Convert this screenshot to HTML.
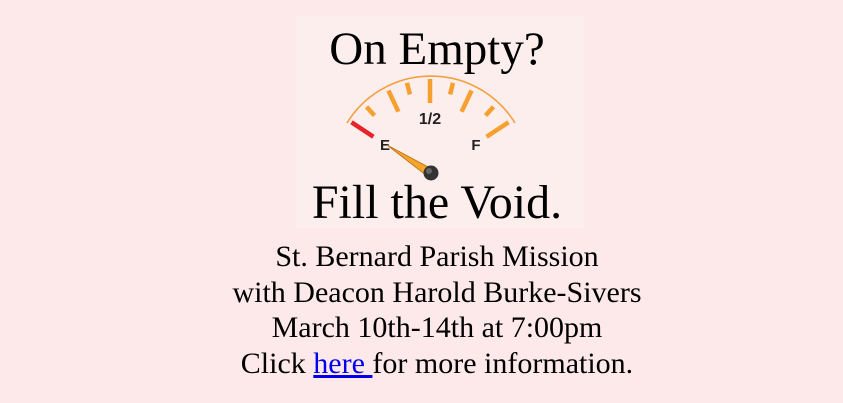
<!DOCTYPE html>
<html><head><meta charset="utf-8"><style>
html,body{margin:0;padding:0;}
body{width:843px;height:403px;background:#fde9e9;position:relative;overflow:hidden;font-family:"Liberation Serif","Times New Roman",serif;color:#000;}
.img{position:absolute;left:296px;top:16px;width:288px;height:212px;background:#fdeeee;}
.t{position:absolute;left:0;width:874px;text-align:center;white-space:nowrap;}
.big{font-size:47px;line-height:47px;}
.sm{font-size:30px;line-height:35.6px;}
a{color:#0000ee;text-decoration:underline;}
</style></head><body>
<div class="img"></div>
<div class="t big" style="top:26px;">On Empty?</div>
<svg style="position:absolute;left:0;top:0" width="843" height="403">
<path d="M347,123 A98.6,98.6 0 0 1 515,123" fill="none" stroke="#f4a040" stroke-width="1.6"/>
<g stroke-width="4.5" stroke-linecap="butt">
<line x1="351.5" y1="122.3" x2="373.4" y2="136.7" stroke="#e8222a"/>
<line x1="366.5" y1="106.8" x2="374.5" y2="115.5" stroke="#f7a030"/>
<line x1="388.4" y1="90.5" x2="398.4" y2="111.7" stroke="#f7a030"/>
<line x1="407.0" y1="82.8" x2="409.9" y2="94.4" stroke="#f7a030"/>
<line x1="430" y1="79" x2="430" y2="103" stroke="#f7a030"/>
<line x1="453.0" y1="82.8" x2="450.1" y2="94.4" stroke="#f7a030"/>
<line x1="471.6" y1="90.5" x2="461.6" y2="111.7" stroke="#f7a030"/>
<line x1="493.5" y1="106.8" x2="485.5" y2="115.5" stroke="#f7a030"/>
<line x1="508.5" y1="122.3" x2="486.6" y2="136.7" stroke="#f7a030"/>
</g>
<text x="430" y="124" text-anchor="middle" font-family="Liberation Sans" font-weight="bold" font-size="16" fill="#222">1/2</text>
<text x="385" y="150" text-anchor="middle" font-family="Liberation Sans" font-weight="bold" font-size="15" fill="#222">E</text>
<text x="476" y="150" text-anchor="middle" font-family="Liberation Sans" font-weight="bold" font-size="15" fill="#222">F</text>
<polygon points="387,145 430,168 427,176" fill="#f2a52a" stroke="#c07010" stroke-width="0.8"/>
<circle cx="431" cy="173" r="7.5" fill="#333"/>
<circle cx="429" cy="171" r="3" fill="#666"/>
</svg>
<div class="t big" style="top:179px;font-size:48px;">Fill the Void.</div>
<div class="t sm" style="top:239px;">St. Bernard Parish Mission<br>with Deacon Harold Burke-Sivers<br>March 10th-14th at 7:00pm<br>Click <a>here </a>for more information.</div>
</body></html>
